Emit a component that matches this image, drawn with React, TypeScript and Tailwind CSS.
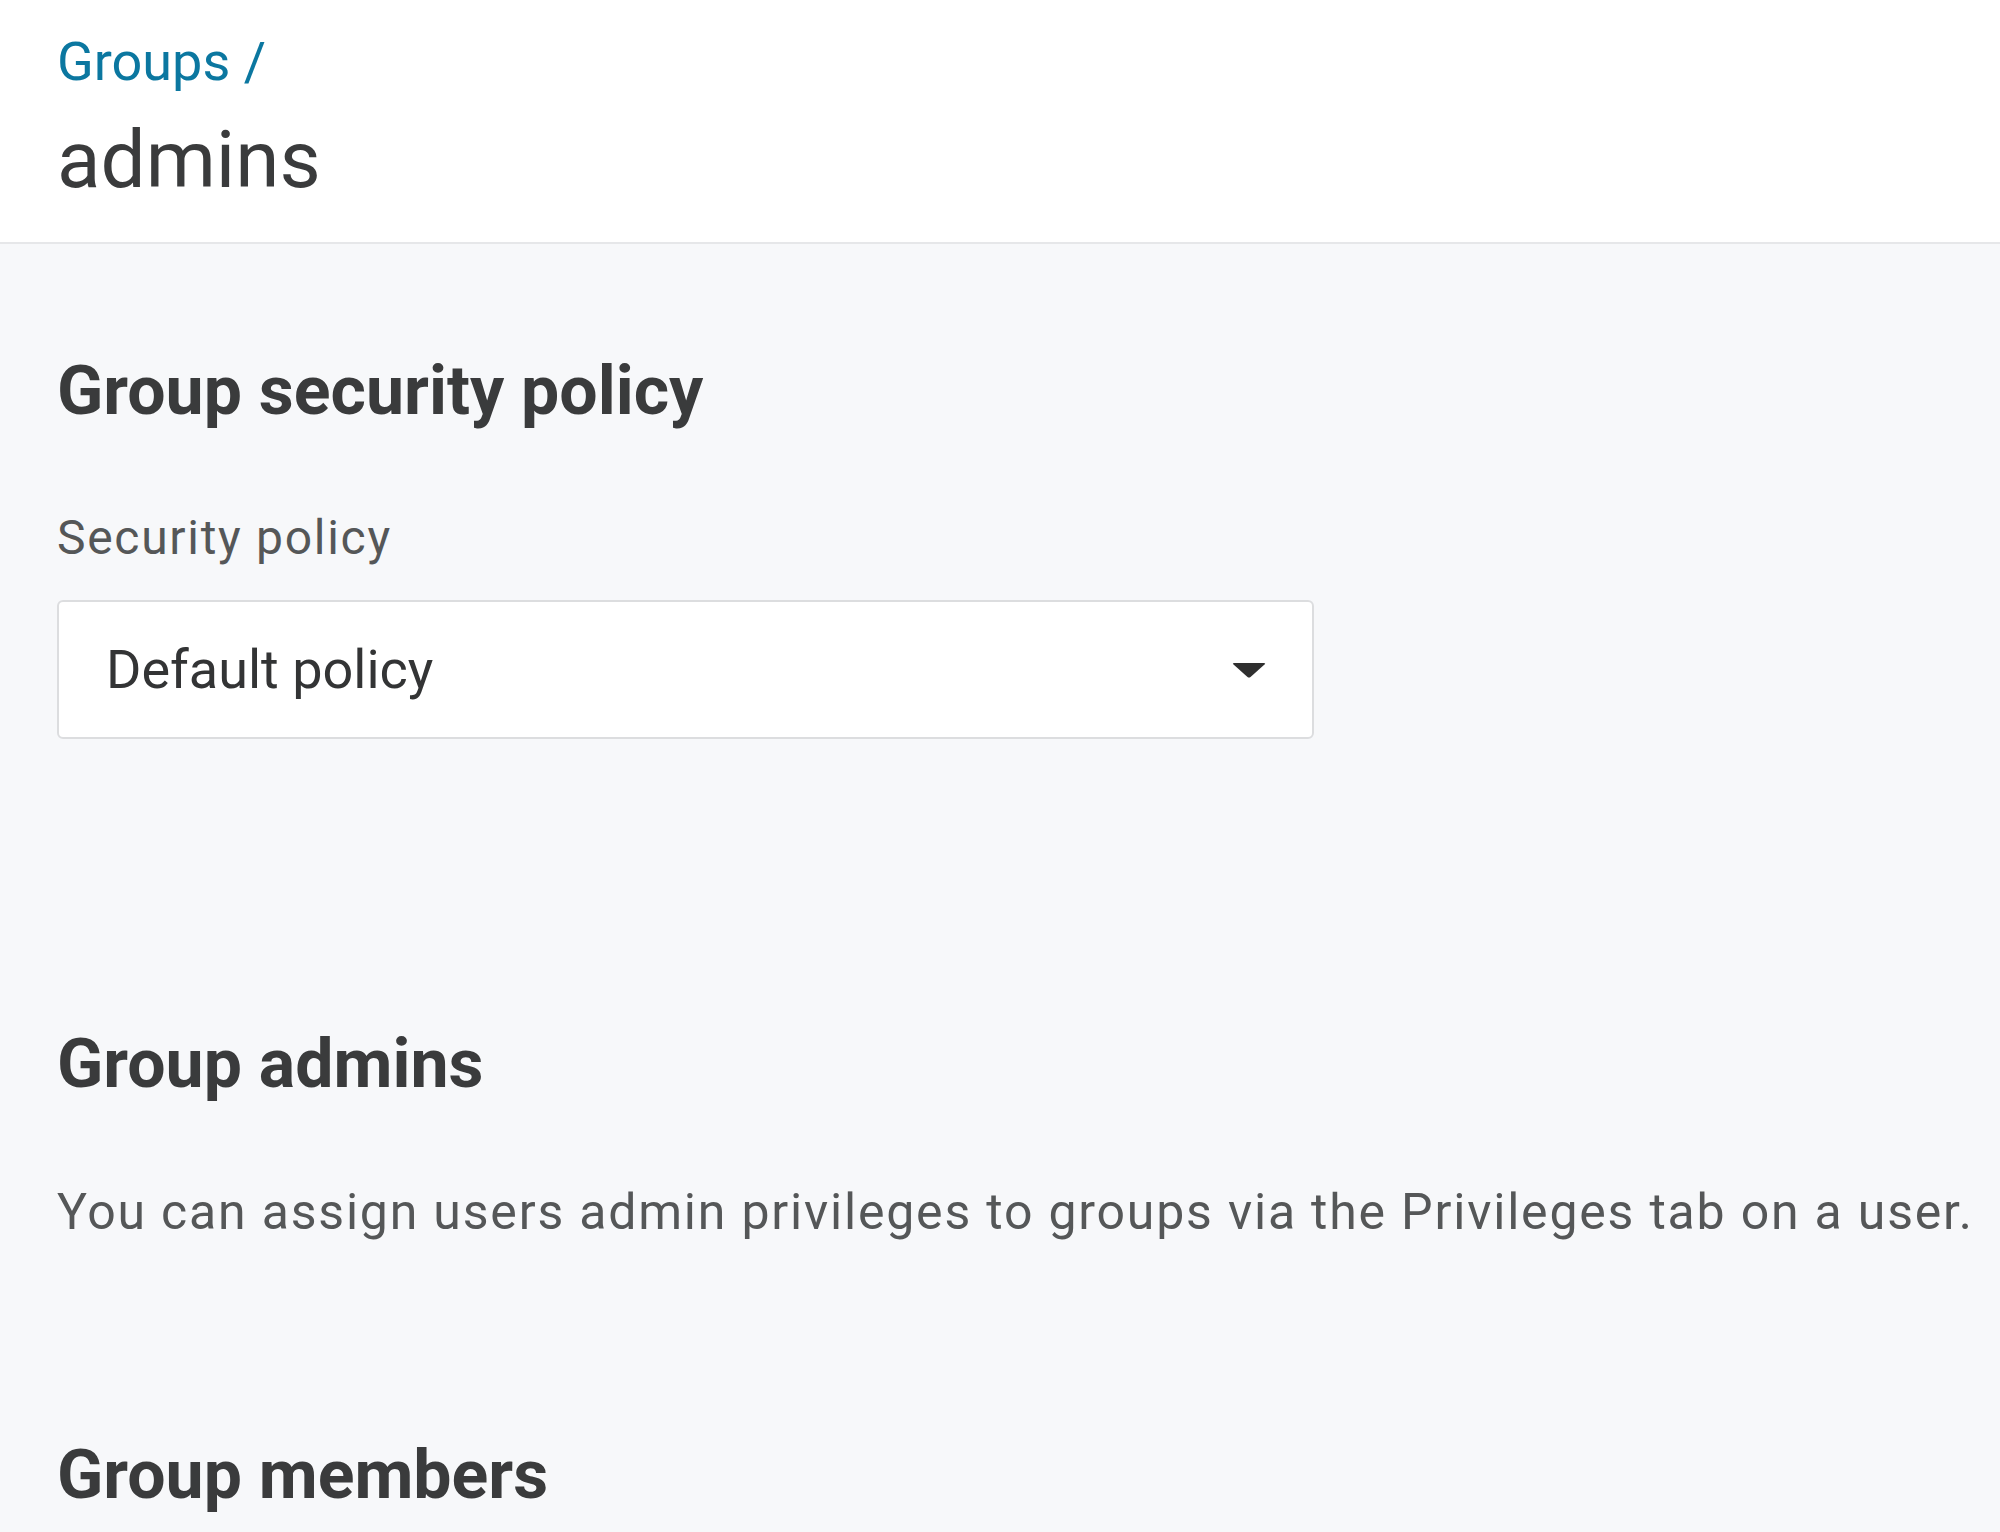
import React from 'react';

const font = { fontFamily: 'Roboto, "Noto Sans", sans-serif' };

const Caret: React.FC = () => (
  <svg width="36" height="18" viewBox="0 0 36 18" className="shrink-0">
    <path d="M3 2 L33 2 Q35 2 33.5 3.6 L19.5 16 Q18 17.2 16.5 16 L2.5 3.6 Q1 2 3 2 Z" fill="#2f2f2f" />
  </svg>
);

const App: React.FC = () => {
  return (
    <div className="min-h-screen bg-[#f7f8fa] text-[#3a3b3c]" style={font}>
      <header className="bg-white border-b-2 border-[#e6e7e9] px-[57px] pt-[30px] pb-[34px]">
        <div className="text-[54px] leading-[64px] text-[#0b77a0]">
          <a href="#">Groups</a> /
        </div>
        <h1 className="mt-[18px] text-[80px] leading-[96px] text-[#3a3b3c]">admins</h1>
      </header>

      <main className="px-[57px] pt-[107px]">
        <section>
          <h2 className="text-[68px] leading-[80px] font-bold">Group security policy</h2>
          <label className="block mt-[79px] text-[48px] leading-[56px] tracking-[1.7px] text-[#555758]">Security policy</label>
          <div className="mt-[34px] w-[1257px] h-[139px] bg-white border-2 border-[#dcdddf] rounded-[6px] flex items-center justify-between pl-[47px] pr-[45px]">
            <span className="text-[54px] leading-[64px] text-[#333435]">Default policy</span>
            <Caret />
          </div>
        </section>

        <section className="mt-[285px]">
          <h2 className="text-[68px] leading-[80px] font-bold">Group admins</h2>
          <p className="mt-[80px] text-[50px] leading-[56px] tracking-[1.8px] text-[#555758] whitespace-nowrap">
            You can assign users admin privileges to groups via the Privileges tab on a user.
          </p>
        </section>

        <section className="mt-[195px]">
          <h2 className="text-[68px] leading-[80px] font-bold">Group members</h2>
        </section>
      </main>
    </div>
  );
};

export default App;
